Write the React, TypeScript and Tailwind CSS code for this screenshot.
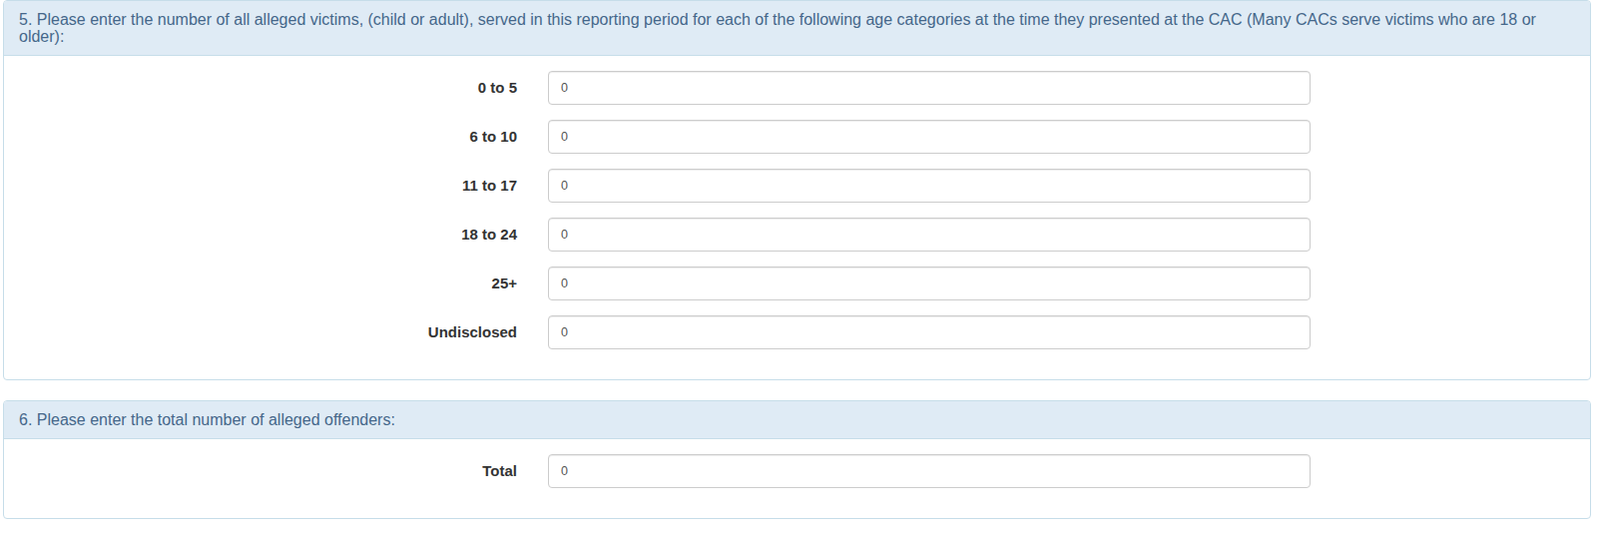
import React from "react";

type Row = { label: string; value: string };

const ageRows: Row[] = [
  { label: "0 to 5", value: "0" },
  { label: "6 to 10", value: "0" },
  { label: "11 to 17", value: "0" },
  { label: "18 to 24", value: "0" },
  { label: "25+", value: "0" },
  { label: "Undisclosed", value: "0" },
];

function FieldRow({ label, value }: Row) {
  return (
    <div className="flex items-center mb-[15px] h-[34px]">
      <label className="w-[499px] text-right text-[15px] font-bold text-[#333333]">
        {label}
      </label>
      <input
        type="text"
        defaultValue={value}
        className="ml-[31px] w-[764px] h-[34px] border border-[#cccccc] rounded-[4px] px-[12px] text-[12.5px] text-[#555555] bg-white shadow-[inset_0_1px_1px_rgba(0,0,0,0.075)] focus:outline-none"
      />
    </div>
  );
}

function Panel({ title, rows }: { title: string; rows: Row[] }) {
  return (
    <div className="w-[1591px] ml-[3px] mb-[20px] border border-[#c6dde9] rounded-[4px] bg-white">
      <div className="px-[15px] py-[10px] bg-[#dfebf5] border-b border-[#c6dde9] rounded-t-[3px] text-[16px] leading-[17px] text-[#45678a]">
        {title}
      </div>
      <div className="pt-[15px] pb-[15px] px-[15px]">
        {rows.map((r) => (
          <FieldRow key={r.label} label={r.label} value={r.value} />
        ))}
      </div>
    </div>
  );
}

export default function App() {
  return (
    <div className="w-[1603px] h-[535px] bg-white overflow-hidden font-['Liberation_Sans',Arial,sans-serif]">
      <Panel
        title="5. Please enter the number of all alleged victims, (child or adult), served in this reporting period for each of the following age categories at the time they presented at the CAC (Many CACs serve victims who are 18 or older):"
        rows={ageRows}
      />
      <Panel
        title="6. Please enter the total number of alleged offenders:"
        rows={[{ label: "Total", value: "0" }]}
      />
    </div>
  );
}
